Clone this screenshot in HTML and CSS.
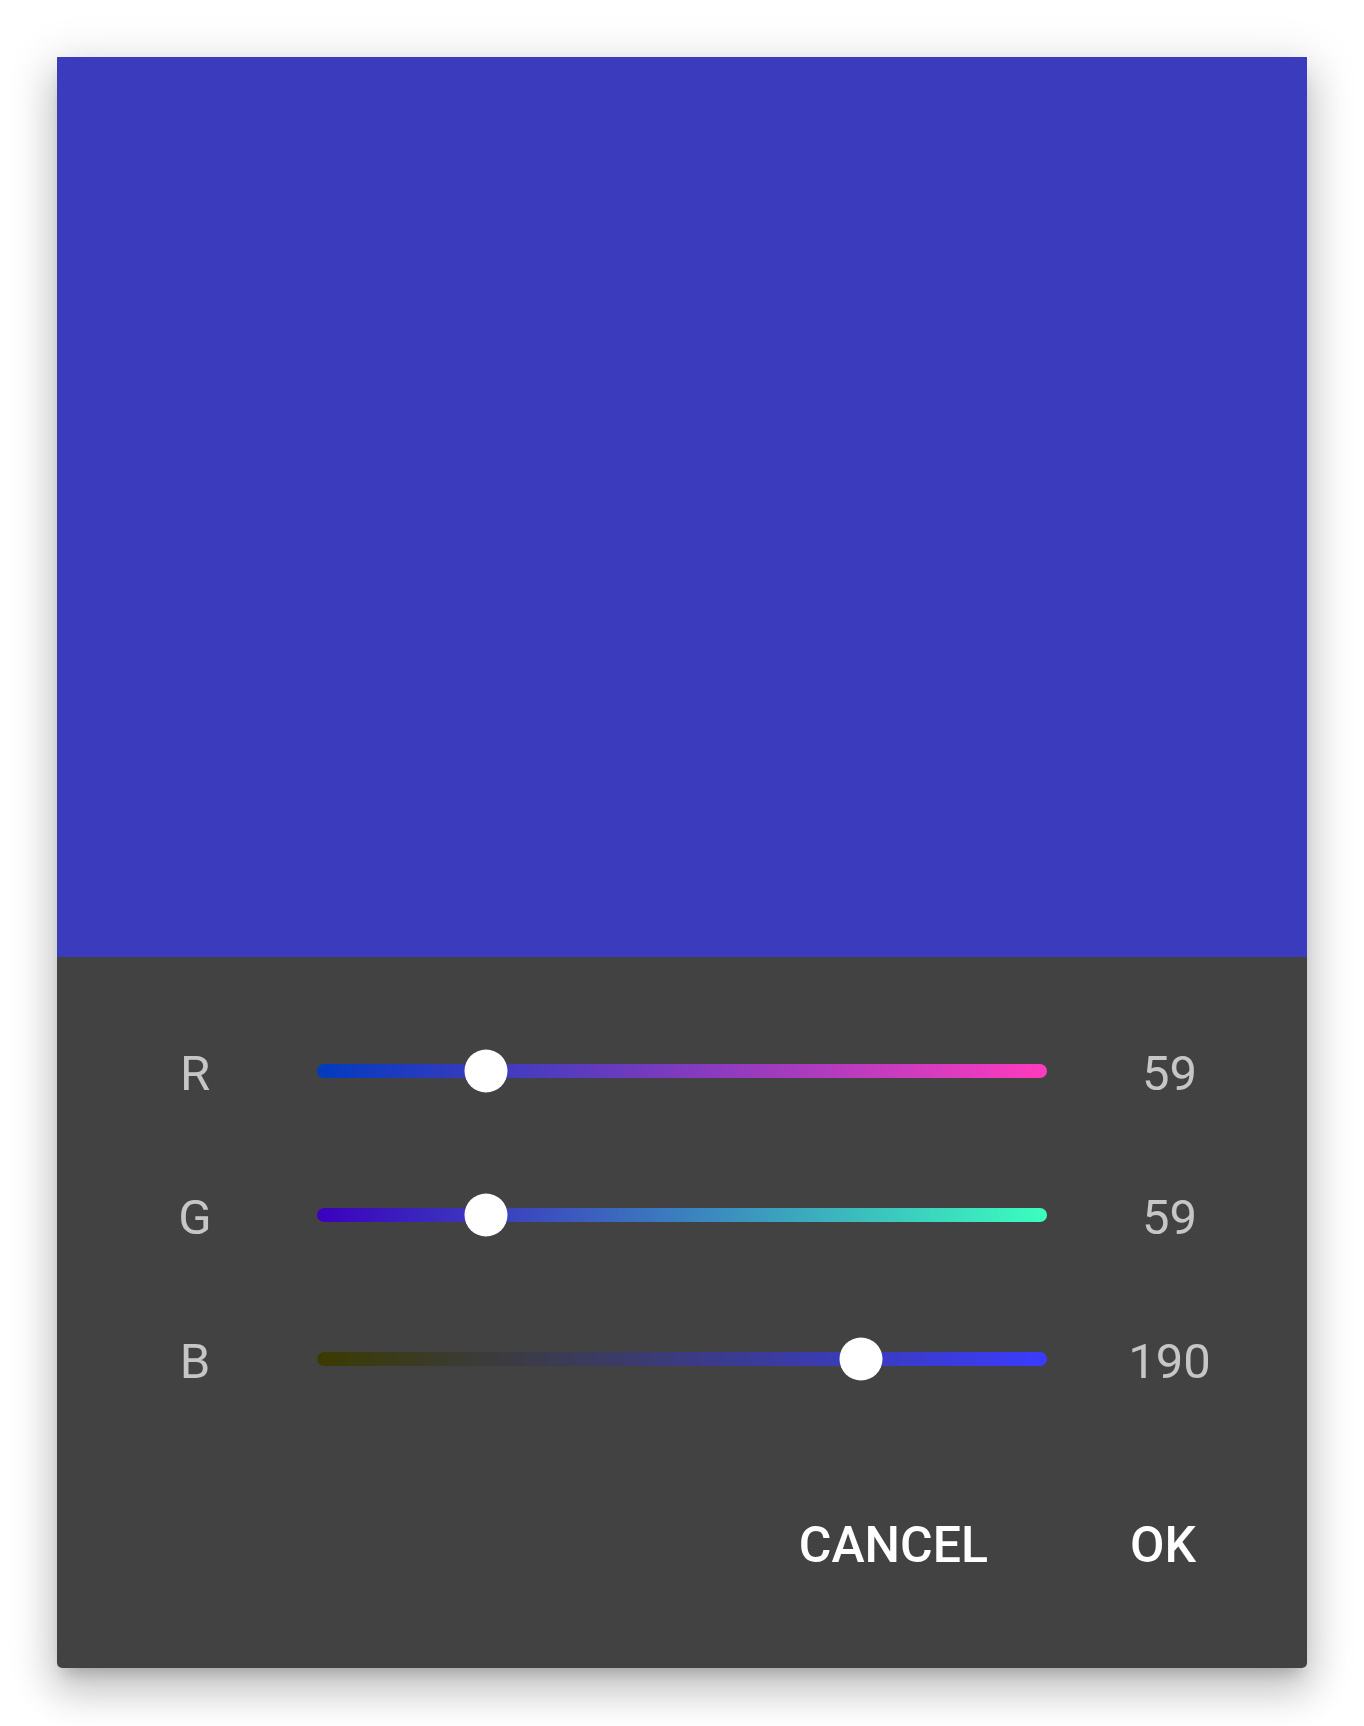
FILE: index.html
```html
<!DOCTYPE html>
<html>
<head>
<meta charset="utf-8">
<link rel="stylesheet" href="styles.css">
</head>
<body>
<div class="dialog">
  <div class="swatch"></div>
  <div class="panel">
    <div class="rows">
      <div class="row">
        <span class="label">R</span>
        <div class="track track-r"><span class="thumb" style="left: 23.14%"></span></div>
        <span class="value">59</span>
      </div>
      <div class="row">
        <span class="label">G</span>
        <div class="track track-g"><span class="thumb" style="left: 23.14%"></span></div>
        <span class="value">59</span>
      </div>
      <div class="row">
        <span class="label">B</span>
        <div class="track track-b"><span class="thumb" style="left: 74.51%"></span></div>
        <span class="value">190</span>
      </div>
    </div>
    <div class="actions">
      <button class="btn">CANCEL</button>
      <button class="btn">OK</button>
    </div>
  </div>
</div>
</body>
</html>
```
FILE: styles.css
```css
html, body {
  margin: 0;
  padding: 0;
  background: #ffffff;
}
body {
  padding: 57px;
  font-family: Roboto, "Noto Sans", sans-serif;
}
.dialog {
  width: 1250px;
  border-radius: 0 0 5px 5px;
  overflow: hidden;
  box-shadow: 0 24px 38px 3px rgba(0,0,0,0.14), 0 9px 46px 8px rgba(0,0,0,0.12), 0 11px 15px -7px rgba(0,0,0,0.2);
}
.swatch {
  height: 900px;
  background: #3b3bbe;
}
.panel {
  background: #424242;
  height: 711px;
  box-sizing: border-box;
  padding-top: 42px;
  display: flex;
  flex-direction: column;
}
.rows {
  display: flex;
  flex-direction: column;
}
.row {
  height: 144px;
  display: grid;
  grid-template-columns: 96px 730px 96px;
  column-gap: 74px;
  padding-left: 90px;
  align-items: center;
}
.row .value { margin-left: 1px; }
.label, .value {
  font-size: 49px;
  color: rgba(255,255,255,0.7);
  text-align: center;
  line-height: 56px;
  padding-top: 5px;
}
.track {
  position: relative;
  height: 14px;
  border-radius: 7px;
}
.track-r { background: linear-gradient(to right, rgb(0,59,190), rgb(255,59,190)); }
.track-g { background: linear-gradient(to right, rgb(59,0,190), rgb(59,255,190)); }
.track-b { background: linear-gradient(to right, rgb(59,59,0), rgb(59,59,255)); }
.thumb {
  position: absolute;
  top: 50%;
  width: 43px;
  height: 43px;
  border-radius: 50%;
  background: #ffffff;
  transform: translate(-50%, -50%);
}
.actions {
  margin-top: 41px;
  height: 144px;
  display: flex;
  justify-content: flex-end;
  align-items: center;
  gap: 142px;
  padding-right: 111px;
}
.btn {
  background: none;
  border: none;
  padding: 0;
  margin: 0;
  font-family: Roboto, "Noto Sans", sans-serif;
  font-weight: 500;
  font-size: 50px;
  line-height: 56px;
  padding-top: 2px;
  color: #ffffff;
}
```
